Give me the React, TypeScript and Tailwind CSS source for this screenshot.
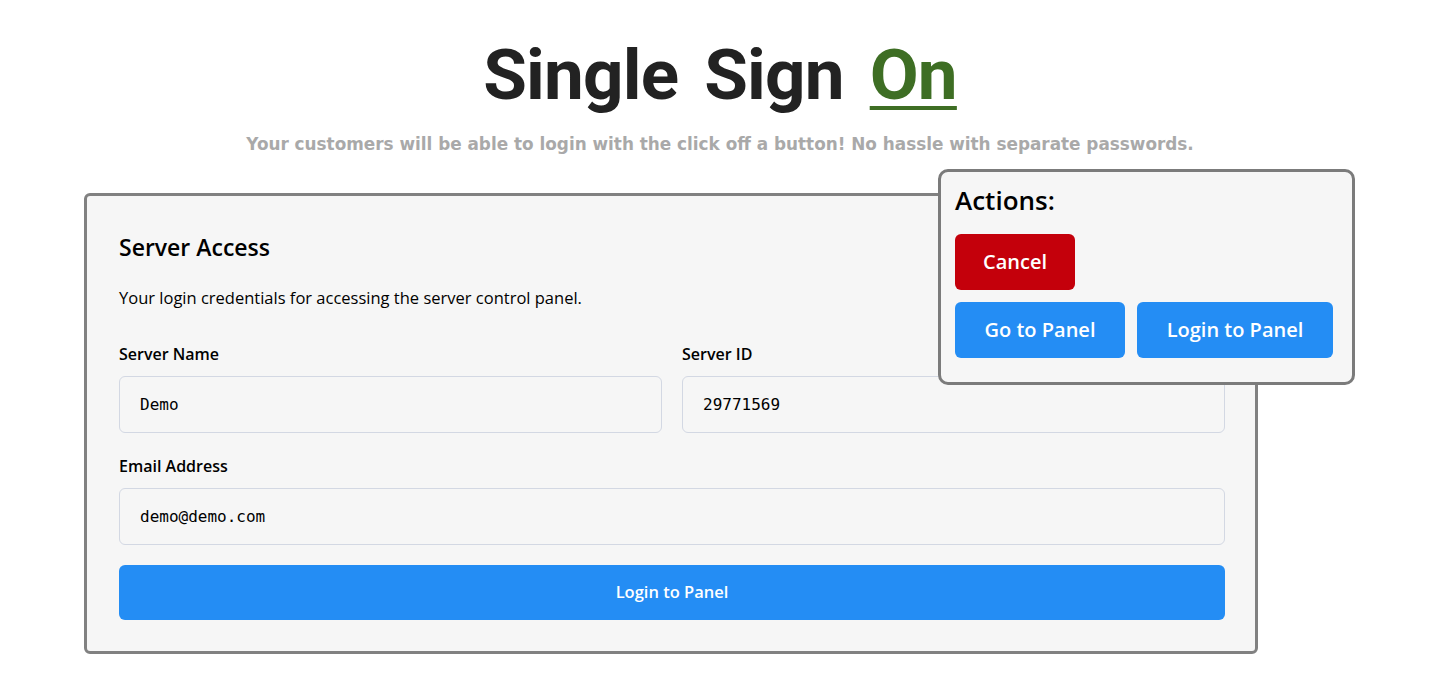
import React from 'react';

const fields = [
  { label: 'Server Name', value: 'Demo' },
  { label: 'Server ID', value: '29771569' },
];

function Field({ label, value }: { label: string; value: string }) {
  return (
    <div className="flex flex-col">
      <label className="text-[16px] leading-6 font-semibold text-black">{label}</label>
      <div className="mt-[10px] h-[57px] flex items-center rounded-md border border-[#d3d8e3] bg-[#f6f6f6] pl-5 font-['DejaVu_Sans_Mono',monospace] text-[16px] text-black">
        {value}
      </div>
    </div>
  );
}

export default function App() {
  return (
    <div className="relative min-h-[683px] w-[1440px] bg-white font-['Open_Sans',sans-serif]">
      {/* Hero */}
      <div className="flex flex-col items-center pt-[33px]">
        <h1 className="font-['Roboto',sans-serif] text-[71px] leading-[84px] font-bold tracking-[-0.8px] [word-spacing:9px] text-[#222222]">
          Single Sign{' '}
          <span className="text-[#3e6e24] underline decoration-[4px] underline-offset-[7px]">On</span>
        </h1>
        <p className="mt-[15px] font-['DejaVu_Sans',sans-serif] text-[16.85px] leading-6 font-bold text-[#a9a9a9]">
          Your customers will be able to login with the click off a button! No hassle with separate passwords.
        </p>
      </div>

      {/* Card */}
      <div className="mt-[37px] pl-[84px]">
        <div className="w-[1174px] rounded-md border-[3px] border-[#818181] bg-[#f6f6f6] pt-8 pb-[31px] pl-8 pr-[30px]">
          <h2 className="mt-[3px] text-[23px] leading-[33px] font-semibold text-black">Server Access</h2>
          <p className="mt-[22px] text-[16.5px] leading-6 text-black">
            Your login credentials for accessing the server control panel.
          </p>
          <div className="mt-8 grid grid-cols-2 gap-5">
            {fields.map((f) => (
              <Field key={f.label} label={f.label} value={f.value} />
            ))}
          </div>
          <div className="mt-[21px]">
            <Field label="Email Address" value="demo@demo.com" />
          </div>
          <button className="mt-5 h-[55px] w-full rounded-md bg-[#248df4] text-[16.5px] font-semibold text-white">
            Login to Panel
          </button>
        </div>
      </div>

      {/* Actions popover */}
      <div className="absolute left-[938px] top-[169px] w-[417px] rounded-[10px] border-[3px] border-[#7b7b7b] bg-[#f6f6f6] px-[14px] pt-[10px] pb-6">
        <h3 className="text-[26px] leading-9 font-semibold text-black">Actions:</h3>
        <div className="mt-4 flex flex-col gap-3">
          <div>
            <button className="h-14 w-[120px] rounded-md bg-[#c4000b] text-[20px] font-semibold text-white">
              Cancel
            </button>
          </div>
          <div className="flex gap-3">
            <button className="h-14 w-[170px] rounded-md bg-[#248df4] text-[20px] font-semibold text-white">
              Go to Panel
            </button>
            <button className="h-14 w-[196px] rounded-md bg-[#248df4] text-[20px] font-semibold text-white">
              Login to Panel
            </button>
          </div>
        </div>
      </div>
    </div>
  );
}
